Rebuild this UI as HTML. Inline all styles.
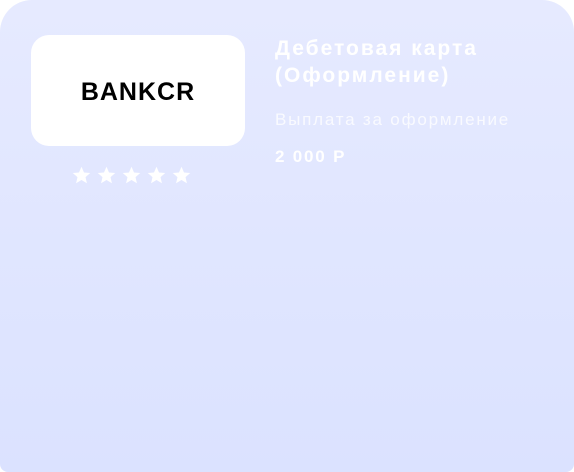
<!DOCTYPE html>
<html><head><meta charset="utf-8"><style>
html,body{margin:0;padding:0;width:574px;height:472px;overflow:hidden;background:#fff;}
.card{position:absolute;left:0;top:0;width:574px;height:472px;border-radius:32px 32px 8px 8px;background:linear-gradient(180deg,#e6eaff 0%,#dbe2ff 100%);font-family:"Liberation Sans","DejaVu Sans",sans-serif;}
.logo{position:absolute;left:31px;top:35px;width:214px;height:111px;background:#fff;border-radius:18px;}
.logo span{position:absolute;left:0;right:0;top:43px;text-align:center;font-weight:bold;font-size:25px;letter-spacing:1px;color:#000;}
.stars{position:absolute;left:71px;top:165px;}
.stars svg{position:absolute;top:0;}
.title{position:absolute;left:275px;top:35px;color:#fff;font-weight:bold;font-size:21px;letter-spacing:2px;line-height:27px;}
.sub{position:absolute;left:275px;top:110px;color:#fff;font-size:17px;letter-spacing:1.8px;opacity:.8}
.price{position:absolute;left:275px;top:147px;color:#fff;font-weight:bold;font-size:17px;letter-spacing:1.8px;}
</style></head><body>
<div class="card">
<div class="logo"><span>BANKCR</span></div>
<div class="stars">
<svg style="left:0" width="21" height="21" viewBox="0 0 24 24"><path d="M12 2l2.9 6.6 7.1.6-5.4 4.7 1.6 7-6.2-3.7-6.2 3.7 1.6-7L2 9.2l7.1-.6z" fill="#fff"/></svg>
<svg style="left:25px" width="21" height="21" viewBox="0 0 24 24"><path d="M12 2l2.9 6.6 7.1.6-5.4 4.7 1.6 7-6.2-3.7-6.2 3.7 1.6-7L2 9.2l7.1-.6z" fill="#fff"/></svg>
<svg style="left:50px" width="21" height="21" viewBox="0 0 24 24"><path d="M12 2l2.9 6.6 7.1.6-5.4 4.7 1.6 7-6.2-3.7-6.2 3.7 1.6-7L2 9.2l7.1-.6z" fill="#fff"/></svg>
<svg style="left:75px" width="21" height="21" viewBox="0 0 24 24"><path d="M12 2l2.9 6.6 7.1.6-5.4 4.7 1.6 7-6.2-3.7-6.2 3.7 1.6-7L2 9.2l7.1-.6z" fill="#fff"/></svg>
<svg style="left:100px" width="21" height="21" viewBox="0 0 24 24"><path d="M12 2l2.9 6.6 7.1.6-5.4 4.7 1.6 7-6.2-3.7-6.2 3.7 1.6-7L2 9.2l7.1-.6z" fill="#fff"/></svg>
</div>
<div class="title">Дебетовая карта<br>(Оформление)</div>
<div class="sub">Выплата за оформление</div>
<div class="price">2 000 Р</div>
</div>
</body></html>
